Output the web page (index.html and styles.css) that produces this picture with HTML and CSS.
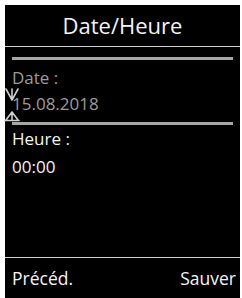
FILE: index.html
```html
<!DOCTYPE html>
<html>
<head>
<meta charset="utf-8">
<link rel="stylesheet" href="styles.css">
</head>
<body>
<div class="screen">
  <div class="header">Date/Heure</div>
  <div class="content">
    <div class="bar"></div>
    <div class="field first">
      <div class="label dim">Date :</div>
      <div class="value dim">15.08.2018</div>
      <svg class="cursor" width="16" height="34" viewBox="0 0 16 34">
        <g stroke="#cfcfcf" stroke-width="1.6" fill="none" stroke-linecap="round">
          <path d="M8 12 L2 1 M8 12 L8 1 M8 12 L14 1"/>
          <path d="M8 24 L8 32 M8 24 L2 32 M8 24 L14 32 M1 32.5 L15 32.5"/>
        </g>
      </svg>
    </div>
    <div class="bar"></div>
    <div class="field second">
      <div class="label">Heure :</div>
      <div class="value">00:00</div>
    </div>
  </div>
  <div class="footer">
    <span>Précéd.</span>
    <span>Sauver</span>
  </div>
</div>
</body>
</html>
```
FILE: styles.css
```css
html, body {
  margin: 0;
  padding: 0;
  background: #fff;
}
body {
  width: 242px;
  height: 298px;
  overflow: hidden;
  font-family: "Open Sans", "Noto Sans", sans-serif;
}
.screen {
  margin: 5px 2px 0 5px;
  width: 235px;
  height: 293px;
  background: #000;
  color: #f4f4f4;
  display: flex;
  flex-direction: column;
}
.header {
  box-sizing: border-box;
  height: 42px;
  border-bottom: 1px solid #cfcfcf;
  display: flex;
  align-items: center;
  justify-content: center;
  font-size: 22px;
  line-height: 1;
  padding-bottom: 1px;
}
.content {
  flex: 1;
  padding: 10px 7px 0 7px;
  display: flex;
  flex-direction: column;
}
.bar {
  height: 3px;
  background: #a6a6a6;
}
.field {
  position: relative;
  display: flex;
  flex-direction: column;
}
.first {
  padding: 5px 0 5px 0;
}
.second {
  padding: 1px 0 0 0;
}
.label, .value {
  font-size: 17px;
  line-height: 26px;
}
.second .value {
  line-height: 30px;
}
.dim { color: #9c9c9c; }
.cursor {
  position: absolute;
  left: -8px;
  top: 28px;
}
.footer {
  box-sizing: border-box;
  border-top: 1px solid #cfcfcf;
  height: 41px;
  display: flex;
  justify-content: space-between;
  align-items: center;
  padding: 0 4px 0 7px;
  font-size: 17.5px;
}
```
